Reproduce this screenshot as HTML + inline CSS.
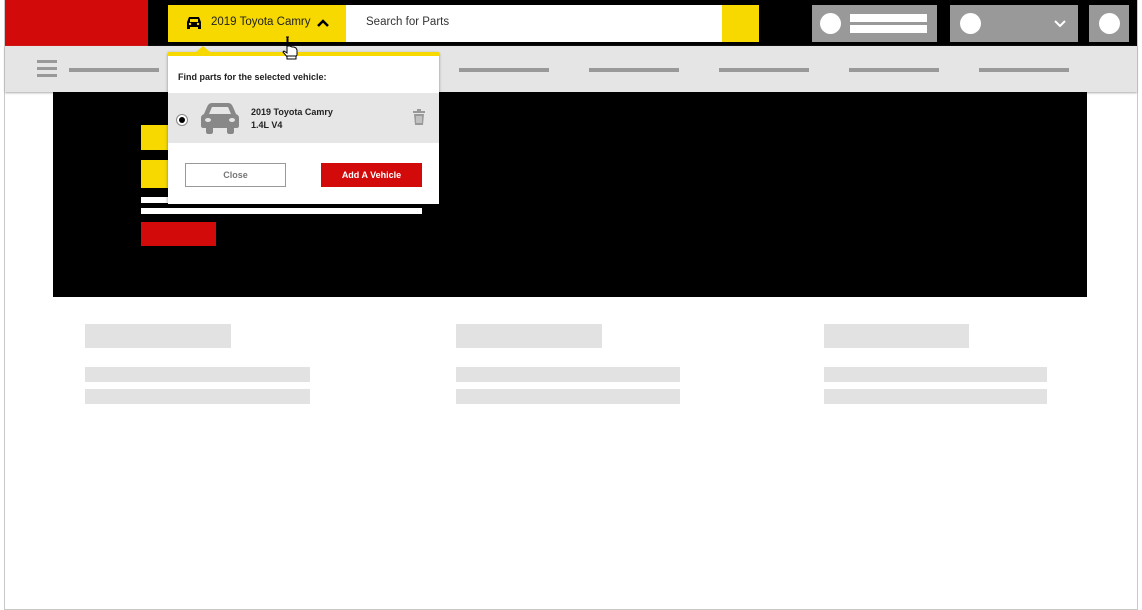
<!DOCTYPE html>
<html><head><style>
*{margin:0;padding:0;box-sizing:border-box}
body{width:1142px;height:610px;background:#fff;position:relative;overflow:hidden;font-family:"Liberation Sans",sans-serif}
.a{position:absolute}
</style></head><body>
<div class="a" style="left:4px;top:0;width:1134px;height:610px;border:1px solid #c8c8c8;border-top:none"></div>
<div class="a" style="left:5px;top:0;width:1132px;height:46px;background:#000"></div>
<div class="a" style="left:5px;top:0;width:143px;height:46px;background:#d20a0a"></div>
<div class="a" style="left:168px;top:5px;width:178px;height:37px;background:#f7d900"></div>
<svg class="a" style="left:186px;top:16px" width="16" height="14" viewBox="0 0 16 14"><path d="M3 1h10l2 5v7h-3v-2H4v2H1V6z" fill="#000"/><rect x="4" y="3" width="8" height="3" fill="#f7d900"/><circle cx="4" cy="8" r="1.2" fill="#f7d900"/><circle cx="12" cy="8" r="1.2" fill="#f7d900"/></svg>
<div class="a" style="left:211px;top:16px;font-size:11.5px;color:#222">2019 Toyota Camry</div>
<svg class="a" style="left:316px;top:18px" width="14" height="10"><path d="M2 8l5-5 5 5" stroke="#000" stroke-width="2.5" fill="none"/></svg>
<div class="a" style="left:346px;top:5px;width:376px;height:37px;background:#fff"></div>
<div class="a" style="left:366px;top:16px;font-size:11.5px;color:#333">Search for Parts</div>
<div class="a" style="left:722px;top:5px;width:37px;height:37px;background:#f7d900"></div>
<div class="a" style="left:812px;top:5px;width:125px;height:37px;background:#999"></div>
<div class="a" style="left:820px;top:13px;width:21px;height:21px;border-radius:50%;background:#fff"></div>
<div class="a" style="left:850px;top:14px;width:77px;height:8px;background:#fff"></div>
<div class="a" style="left:850px;top:25px;width:77px;height:8px;background:#fff"></div>
<div class="a" style="left:950px;top:5px;width:128px;height:37px;background:#999"></div>
<div class="a" style="left:960px;top:13px;width:21px;height:21px;border-radius:50%;background:#fff"></div>
<svg class="a" style="left:1054px;top:20px" width="12" height="8"><path d="M1 1l5 5 5-5" stroke="#fff" stroke-width="2" fill="none"/></svg>
<div class="a" style="left:1089px;top:5px;width:40px;height:37px;background:#999"></div>
<div class="a" style="left:1099px;top:13px;width:21px;height:21px;border-radius:50%;background:#fff"></div>
<div class="a" style="left:5px;top:46px;width:1132px;height:46px;background:#e5e5e5;box-shadow:0 1px 2px #aaa"></div>
<div class="a" style="left:37px;top:60px;width:20px;height:3px;background:#999"></div>
<div class="a" style="left:37px;top:67px;width:20px;height:3px;background:#999"></div>
<div class="a" style="left:37px;top:74px;width:20px;height:3px;background:#999"></div>
<div class="a" style="left:69px;top:68px;width:90px;height:4px;background:#999"></div>
<div class="a" style="left:459px;top:68px;width:90px;height:4px;background:#999"></div>
<div class="a" style="left:589px;top:68px;width:90px;height:4px;background:#999"></div>
<div class="a" style="left:719px;top:68px;width:90px;height:4px;background:#999"></div>
<div class="a" style="left:849px;top:68px;width:90px;height:4px;background:#999"></div>
<div class="a" style="left:979px;top:68px;width:90px;height:4px;background:#999"></div>
<div class="a" style="left:53px;top:92px;width:1034px;height:205px;background:#000"></div>
<div class="a" style="left:141px;top:125px;width:60px;height:25px;background:#f7d900"></div>
<div class="a" style="left:141px;top:160px;width:60px;height:28px;background:#f7d900"></div>
<div class="a" style="left:141px;top:197px;width:281px;height:6px;background:#fff"></div>
<div class="a" style="left:141px;top:208px;width:281px;height:6px;background:#fff"></div>
<div class="a" style="left:141px;top:222px;width:75px;height:24px;background:#d20a0a"></div>
<div class="a" style="left:85px;top:324px;width:146px;height:24px;background:#e2e2e2"></div>
<div class="a" style="left:85px;top:367px;width:225px;height:15px;background:#e2e2e2"></div>
<div class="a" style="left:85px;top:389px;width:225px;height:15px;background:#e2e2e2"></div>
<div class="a" style="left:456px;top:324px;width:146px;height:24px;background:#e2e2e2"></div>
<div class="a" style="left:456px;top:367px;width:224px;height:15px;background:#e2e2e2"></div>
<div class="a" style="left:456px;top:389px;width:224px;height:15px;background:#e2e2e2"></div>
<div class="a" style="left:824px;top:324px;width:145px;height:24px;background:#e2e2e2"></div>
<div class="a" style="left:824px;top:367px;width:223px;height:15px;background:#e2e2e2"></div>
<div class="a" style="left:824px;top:389px;width:223px;height:15px;background:#e2e2e2"></div>
<div class="a" style="left:168px;top:52px;width:271px;height:152px;background:#fff;border-top:4px solid #f7d900;box-shadow:0 1px 3px rgba(0,0,0,.4)"></div>
<div class="a" style="left:196px;top:46px;width:0;height:0;border-left:7px solid transparent;border-right:7px solid transparent;border-bottom:6px solid #f7d900"></div>
<div class="a" style="left:178px;top:72px;font-size:9px;font-weight:bold;color:#222">Find parts for the selected vehicle:</div>
<div class="a" style="left:168px;top:93px;width:271px;height:50px;background:#e6e6e6"></div>
<div class="a" style="left:176px;top:114px;width:12px;height:12px;border-radius:50%;background:#fff;border:1px solid #888"></div>
<div class="a" style="left:179px;top:117px;width:6px;height:6px;border-radius:50%;background:#000"></div>
<svg class="a" style="left:200px;top:102px" width="40" height="32" viewBox="0 0 40 32"><path d="M12 1h16c3 0 4 2 5 4l3 7c2 1 3 2 3 4v8c0 1-1 2-2 2h-3v4c0 1-1 2-2 2h-3c-1 0-2-1-2-2v-4H13v4c0 1-1 2-2 2H8c-1 0-2-1-2-2v-4H3c-1 0-2-1-2-2v-8c0-2 1-3 3-4l3-7c1-2 2-4 5-4z" fill="#888"/><path d="M12 5h16l3 7H9z" fill="#e6e6e6"/><ellipse cx="8" cy="18" rx="3" ry="2" fill="#e6e6e6"/><ellipse cx="32" cy="18" rx="3" ry="2" fill="#e6e6e6"/></svg>
<div class="a" style="left:251px;top:106px;font-size:9px;font-weight:bold;color:#222;line-height:13px">2019 Toyota Camry<br>1.4L V4</div>
<svg class="a" style="left:412px;top:109px" width="14" height="17"><rect x="1" y="2" width="12" height="2" fill="#999"/><rect x="5" y="0" width="4" height="2" fill="#999"/><path d="M2 5h10l-1 11H3z" fill="#999"/><path d="M5 7v7M7 7v7M9 7v7" stroke="#e6e6e6"/></svg>
<div class="a" style="left:185px;top:163px;width:101px;height:24px;border:1px solid #999;font-size:9px;font-weight:bold;color:#777;text-align:center;line-height:22px">Close</div>
<div class="a" style="left:321px;top:163px;width:101px;height:24px;background:#d20a0a;font-size:9px;font-weight:bold;color:#fff;text-align:center;line-height:24px">Add A Vehicle</div>
<svg class="a" style="left:281px;top:36px" width="18" height="24"><path d="M5 1c1 0 2 1 2 2v7l2 0 2 1 2 0 2 1 1 2v5l-2 3H7l-5-6 1-1 3 2V3c0-1 1-2 2-2z" fill="#fff" stroke="#000"/><rect x="6" y="20" width="9" height="3" fill="#fff" stroke="#000"/></svg>
</body></html>
